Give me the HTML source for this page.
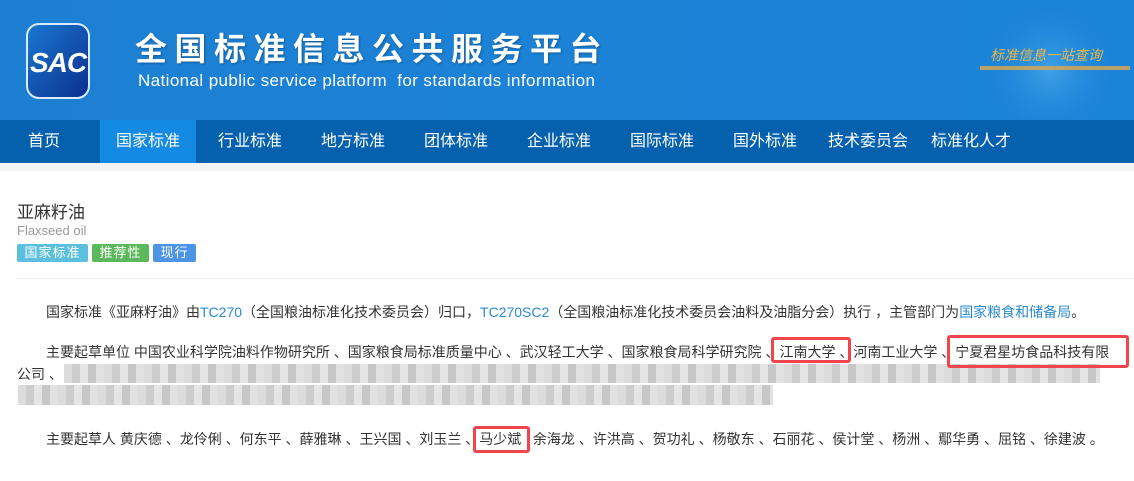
<!DOCTYPE html>
<html><head><meta charset="utf-8"><style>
*{margin:0;padding:0;box-sizing:border-box}
body{width:1134px;height:481px;overflow:hidden;background:#fff;font-family:"Liberation Sans","Noto Sans CJK SC",sans-serif;position:relative;color:#333}
.hdr{position:absolute;left:0;top:0;width:1134px;height:120px;background:linear-gradient(90deg,#1d7fd2 0%,#1b82d6 50%,#1a84d9 100%)}
.nav{position:absolute;left:0;top:120px;width:1134px;height:43px;background:#0561ad}
.nav span{position:absolute;top:0;line-height:43px;color:#fff;font-size:16px;white-space:nowrap}
.strip{position:absolute;left:0;top:163px;width:1134px;height:8px;background:#f3f3f3}
.a{position:absolute;white-space:nowrap;font-size:14px;color:#333}
.lnk{color:#2a8ad0}
.tag{position:absolute;top:244px;height:18px;line-height:18px;color:#fff;font-size:13px;text-align:center;border-radius:2px;letter-spacing:1px}
.blur{position:absolute;background:repeating-linear-gradient(90deg,#d6d6d6 0 8px,#c4c4c4 8px 16px,#e0e0e0 16px 24px,#bdbdbd 24px 32px,#dcdcdc 32px 40px);opacity:.85}
.box{position:absolute;border:3px solid #f0454c;border-radius:3px}
</style></head><body>
<div class="hdr">
<svg width="1134" height="120" style="position:absolute;left:0;top:0">
<defs><linearGradient id="g" x1="0" y1="0" x2="1" y2="1"><stop offset="0" stop-color="#1a78d0"/><stop offset="1" stop-color="#0b2f8e"/></linearGradient>
<radialGradient id="gl" cx="0.5" cy="0.5" r="0.5"><stop offset="0" stop-color="#5ab4f0" stop-opacity=".6"/><stop offset="1" stop-color="#1a84d9" stop-opacity="0"/></radialGradient></defs>
<circle cx="1050" cy="70" r="70" fill="url(#gl)"/>
<rect x="27" y="24" width="62" height="74" rx="12" fill="url(#g)" stroke="#d9ecff" stroke-width="2"/>
<text x="30" y="72" font-family="Liberation Sans" font-style="italic" font-weight="bold" font-size="28" fill="#fff" letter-spacing="-1">SAC</text>
<rect x="980" y="66" width="150" height="4" fill="#e0a84a" opacity=".8"/>
<text x="990" y="60" font-family="Noto Sans CJK SC" font-style="italic" font-size="14" fill="#f0b640">标准信息一站查询</text>
</svg>
<div class="a" style="left:135px;top:24px;font-size:32px;color:#fff;letter-spacing:7.5px;font-weight:bold;text-shadow:1px 1px 2px rgba(0,0,0,.3)">全国标准信息公共服务平台</div>
<div class="a" style="left:138px;top:71px;font-size:17px;color:#fff;letter-spacing:0.4px">National public service platform&nbsp; for standards information</div>
</div>
<div class="nav">
<span style="left:28px">首页</span>
<span style="left:100px;width:96px;background:#158ae5;text-align:center">国家标准</span>
<span style="left:218px">行业标准</span>
<span style="left:321px">地方标准</span>
<span style="left:424px">团体标准</span>
<span style="left:527px">企业标准</span>
<span style="left:630px">国际标准</span>
<span style="left:733px">国外标准</span>
<span style="left:828px">技术委员会</span>
<span style="left:931px">标准化人才</span>
</div>
<div class="strip"></div>
<div class="a" style="left:17px;top:198px;font-size:17px;color:#333">亚麻籽油</div>
<div class="a" style="left:17px;top:223px;font-size:13px;color:#999">Flaxseed oil</div>
<div class="tag" style="left:17px;width:71px;background:#5bc0de">国家标准</div>
<div class="tag" style="left:92px;width:57px;background:#5cb85c">推荐性</div>
<div class="tag" style="left:153px;width:43px;background:#4d93e6">现行</div>
<div style="position:absolute;left:17px;top:278px;width:1117px;height:1px;background:#eee"></div>
<div class="a" style="left:46px;top:302px">国家标准《亚麻籽油》由<span class="lnk">TC270</span>（全国粮油标准化技术委员会）归口，<span class="lnk">TC270SC2</span>（全国粮油标准化技术委员会油料及油脂分会）执行 ，主管部门为<span class="lnk">国家粮食和储备局</span>。</div>
<div class="a" style="left:46px;top:342px">主要起草单位 中国农业科学院油料作物研究所 、国家粮食局标准质量中心 、武汉轻工大学 、国家粮食局科学研究院 、江南大学 、河南工业大学 、宁夏君星坊食品科技有限</div>
<div class="a" style="left:17px;top:364px">公司 、</div>
<div class="blur" style="left:64px;top:364px;width:1036px;height:19px"></div>
<div class="blur" style="left:18px;top:385px;width:755px;height:20px"></div>
<div class="a" style="left:46px;top:429px">主要起草人 黄庆德 、龙伶俐 、何东平 、薛雅琳 、王兴国 、刘玉兰 、马少斌&nbsp;&nbsp; 余海龙 、许洪高 、贺功礼 、杨敬东 、石丽花 、侯计堂 、杨洲 、鄢华勇 、屈铭 、徐建波 。</div>
<div class="box" style="left:771px;top:337px;width:80px;height:26px"></div>
<div class="box" style="left:947px;top:335px;width:182px;height:33px"></div>
<div class="box" style="left:473px;top:426px;width:57px;height:27px"></div>
</body></html>
